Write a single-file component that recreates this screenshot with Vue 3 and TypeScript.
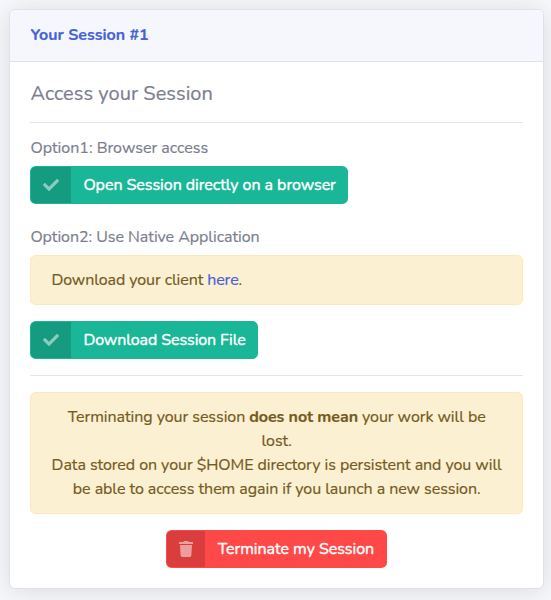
<script setup lang="ts">
const title = 'Your Session #1'
const checkPath = 'M173.898 439.404l-166.4-166.4c-9.997-9.997-9.997-26.206 0-36.204l36.203-36.204c9.997-9.998 26.207-9.998 36.204 0L192 312.69 432.095 72.596c9.997-9.997 26.207-9.997 36.204 0l36.203 36.204c9.997 9.997 9.997 26.206 0 36.204l-294.4 294.401c-9.998 9.997-26.207 9.997-36.204-.001z'
const trashPath = 'M432 32H312l-9.400-18.700A24 24 0 0 0 281.100 0H166.800a23.720 23.720 0 0 0-21.400 13.300L136 32H16A16 16 0 0 0 0 48v32a16 16 0 0 0 16 16h416a16 16 0 0 0 16-16V48a16 16 0 0 0-16-16zM53.200 467a48 48 0 0 0 47.900 45h245.800a48 48 0 0 0 47.900-45L416 128H32z'
</script>

<template>
  <main class="page">
    <section class="card">
      <header class="card-header"><h6>{{ title }}</h6></header>
      <div class="card-body">
        <h5>Access your Session</h5>
        <hr />
        <p class="option option-browser">Option1: Browser access</p>
        <button class="btn success first">
          <span class="icon"><svg width="16" height="16" viewBox="0 0 512 512"><path :d="checkPath" /></svg></span>
          <span class="label">Open Session directly on a browser</span>
        </button>
        <p class="option">Option2: Use Native Application</p>
        <div class="alert client">Download your client <a>here</a>.</div>
        <button class="btn success download">
          <span class="icon"><svg width="16" height="16" viewBox="0 0 512 512"><path :d="checkPath" /></svg></span>
          <span class="label">Download Session File</span>
        </button>
        <hr class="second" />
        <div class="alert centered">
          <div>Terminating your session <strong>does not mean</strong> your work will be</div>
          <div>lost.</div>
          <div>Data stored on your $HOME directory is persistent and you will</div>
          <div>be able to access them again if you launch a new session.</div>
        </div>
        <div class="actions">
          <button class="btn danger">
            <span class="icon"><svg width="14" height="16" viewBox="0 0 448 512"><path :d="trashPath" /></svg></span>
            <span class="label">Terminate my Session</span>
          </button>
        </div>
      </div>
    </section>
  </main>
</template>

<style>
body { background: #f8f9fc; overflow: hidden; }
</style>

<style scoped>
* { box-sizing: border-box; }
.page {
  height: 600px;
  padding: 9px 7px 11px 9px;
  overflow: hidden;
  font: 400 16px/24px Nunito, Lato, sans-serif;
  color: #7c7e8f;
  -webkit-text-stroke: 0.2px currentColor;
}
.card {
  height: 580px;
  border: 1px solid #dfe1ee;
  border-radius: 6px;
  background: #fff;
  box-shadow: 0 2px 28px rgba(58, 59, 69, .17);
}
.card-header {
  height: 52px;
  padding: 13px 20px 14px;
  border-bottom: 1px solid #dfe1ee;
  border-radius: 5px 5px 0 0;
  background: #f6f7fc;
}
h5, h6, p { margin: 0; font-weight: 400; }
h6 { font-size: 16px; font-weight: 700; color: #4562d8; text-indent: .5px; }
.card-body { padding: 19px 20px 0; }
h5 { font-size: 20px; line-height: 25px; letter-spacing: .04px; text-indent: .4px; }
hr { margin: 16px 0 13px; border: 0; border-top: 1px solid #e5e5e8; }
.option { margin-bottom: 6px; white-space: nowrap; letter-spacing: -.05px; text-indent: .4px; }
.option-browser { letter-spacing: 0; }
.btn {
  display: flex;
  height: 38px;
  padding: 1px;
  border: 0;
  border-radius: 5.600px;
  overflow: hidden;
  font: inherit;
  letter-spacing: -.04px;
  color: #fff;
  white-space: nowrap;
  -webkit-text-stroke: 0.4px currentColor;
}
.success { background: #19b797; }
.download { letter-spacing: -.09px; }
.danger { background: #ff4848; }
.first { margin-bottom: 21px; }
.icon {
  display: flex;
  align-items: center;
  padding: 0 12px;
  border-radius: 4.600px 0 0 4.600px;
  background: rgba(0, 0, 0, .15);
}
.icon svg { fill: rgba(255, 255, 255, .5); stroke: none; }
.label { padding: 6px 11.600px 6px 12.400px; }
.alert {
  margin-bottom: 16px;
  padding: 12px 20px;
  border: 1px solid #fbe8bc;
  border-radius: 5.600px;
  background: #fcf0d3;
  color: #735b21;
  letter-spacing: -.055px;
  white-space: nowrap;
  text-indent: .4px;
}
.client { letter-spacing: -.09px; }
.alert a { color: #4661dc; }
.second { margin: 16px 0; }
.centered { text-align: center; }
.actions { display: flex; justify-content: center; }
</style>
